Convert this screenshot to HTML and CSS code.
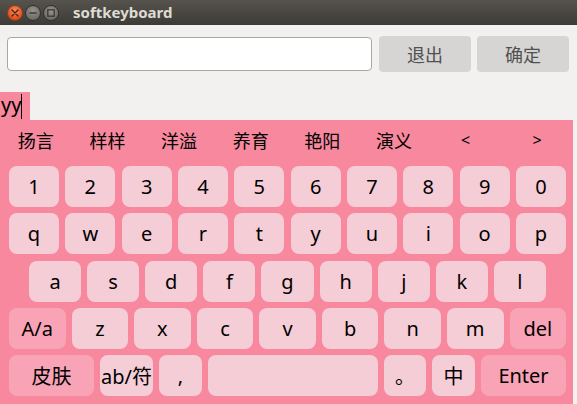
FILE: index.html
```html
<!DOCTYPE html>
<html>
<head>
<meta charset="utf-8">
<title>softkeyboard</title>
<link rel="stylesheet" href="styles.css">
</head>
<body>
<div class="window">
  <div class="titlebar">
    <span class="wbtn close"><svg width="8" height="8" viewBox="0 0 8 8"><path d="M1 1L7 7M7 1L1 7" stroke="#4a2414" stroke-width="1.4" stroke-linecap="round"/></svg></span>
    <span class="wbtn min"><svg width="8" height="8" viewBox="0 0 8 8"><path d="M0.5 4H7.5" stroke="#3a3935" stroke-width="1.4"/></svg></span>
    <span class="wbtn max"><svg width="8" height="8" viewBox="0 0 8 8"><rect x="0.8" y="0.8" width="6.4" height="6.4" fill="none" stroke="#3a3935" stroke-width="1.3"/></svg></span>
    <span class="title">softkeyboard</span>
  </div>
  <div class="toprow">
    <div class="field"></div>
    <div class="pbtn quit">退出</div>
    <div class="pbtn ok">确定</div>
  </div>
  <div class="preedit"><span class="ptext">yy</span><span class="cursor"></span></div>
  <div class="keyboard">
    <div class="cands">
      <span>扬言</span><span>样样</span><span>洋溢</span><span>养育</span><span>艳阳</span><span>演义</span><span class="lat">&lt;</span><span class="lat">&gt;</span>
    </div>
    <div class="rows">
      <div class="row r10">
        <div class="key">1</div><div class="key">2</div><div class="key">3</div><div class="key">4</div><div class="key">5</div><div class="key">6</div><div class="key">7</div><div class="key">8</div><div class="key">9</div><div class="key">0</div>
      </div>
      <div class="row r10">
        <div class="key">q</div><div class="key">w</div><div class="key">e</div><div class="key">r</div><div class="key">t</div><div class="key">y</div><div class="key">u</div><div class="key">i</div><div class="key">o</div><div class="key">p</div>
      </div>
      <div class="row r9 indent">
        <div class="key">a</div><div class="key">s</div><div class="key">d</div><div class="key">f</div><div class="key">g</div><div class="key">h</div><div class="key">j</div><div class="key">k</div><div class="key">l</div>
      </div>
      <div class="row r9">
        <div class="key fn">A/a</div><div class="key">z</div><div class="key">x</div><div class="key">c</div><div class="key">v</div><div class="key">b</div><div class="key">n</div><div class="key">m</div><div class="key fn">del</div>
      </div>
      <div class="row r9 bottom">
        <div class="key fn w85">皮肤</div><div class="key w53">ab/符</div><div class="key w43">,</div><div class="key space"></div><div class="key w42">。</div><div class="key w43">中</div><div class="key fn w85">Enter</div>
      </div>
    </div>
  </div>
</div>
</body>
</html>
```
FILE: styles.css
```css
html, body {
  margin: 0;
  padding: 0;
}
body {
  width: 577px;
  height: 404px;
  overflow: hidden;
  background: #f2f1f0;
  font-family: "Noto Sans", "Noto Sans CJK SC", sans-serif;
}
.window {
  width: 577px;
  height: 404px;
  display: flex;
  flex-direction: column;
}
.titlebar {
  height: 25px;
  flex: none;
  box-sizing: border-box;
  background: linear-gradient(#56534d, #3c3b37);
  display: flex;
  align-items: center;
  padding-left: 7px;
  gap: 2px;
}
.wbtn {
  width: 16px;
  height: 16px;
  border-radius: 50%;
  display: flex;
  align-items: center;
  justify-content: center;
  box-sizing: border-box;
}
.close {
  background: radial-gradient(circle at 50% 35%, #f78d60, #df4b1a 75%);
  border: 1px solid #9a3b18;
}
.min, .max {
  background: radial-gradient(circle at 50% 35%, #95938d, #6d6b66 75%);
  border: 1px solid #33322e;
}
.title {
  margin-left: 12px;
  color: #dfdbd2;
  font-weight: 700;
  font-size: 15px;
  line-height: 25px;
}
.toprow {
  display: flex;
  align-items: center;
  height: 36px;
  margin: 11px 0 0 7px;
}
.field {
  width: 365px;
  height: 34px;
  box-sizing: border-box;
  border: 1px solid #a9a7a3;
  border-radius: 4px;
  background: #ffffff;
}
.pbtn {
  width: 92px;
  height: 36px;
  border-radius: 4px;
  background: #d6d5d4;
  color: #505050;
  font-family: "Noto Sans CJK SC", sans-serif;
  font-size: 18px;
  display: flex;
  align-items: center;
  justify-content: center;
}
.quit { margin-left: 7px; }
.ok { margin-left: 6px; }
.preedit {
  margin-top: 20px;
  width: 30px;
  height: 28px;
  background: #f7889e;
  display: flex;
  align-items: center;
  padding-left: 1px;
  box-sizing: border-box;
}
.ptext {
  font-size: 20px;
  color: #000;
  line-height: 28px;
  margin-top: -2px;
}
.cursor {
  width: 1px;
  height: 25px;
  background: #000;
  margin-left: 0;
}
.keyboard {
  width: 573px;
  flex: 1;
  background: #f7889e;
}
.cands {
  height: 40px;
  display: grid;
  grid-template-columns: repeat(8, 1fr);
  align-items: center;
  justify-items: center;
  font-family: "Noto Sans CJK SC", sans-serif;
  font-size: 18px;
  color: #000;
}
.cands .lat {
  font-family: "Noto Sans", sans-serif;
  font-size: 16px;
}
.rows {
  padding: 6px 7px 0 9px;
  display: flex;
  flex-direction: column;
  gap: 6.25px;
}
.row {
  display: flex;
  height: 41px;
}
.r10 { gap: 6.33px; }
.r9 { gap: 6px; }
.indent { padding: 0 20px; }
.key {
  flex: 1 1 0;
  background: #f5cdd6;
  border-radius: 8px;
  display: flex;
  align-items: center;
  justify-content: center;
  font-size: 20px;
  color: #000;
  white-space: nowrap;
}
.key.fn { background: #f9a3b6; }
.bottom .key { flex: none; }
.w85 { width: 85px; }
.w53 { width: 53px; }
.w43 { width: 43px; }
.w42 { width: 42px; }
.bottom .space { flex: 1 1 0; }
```
